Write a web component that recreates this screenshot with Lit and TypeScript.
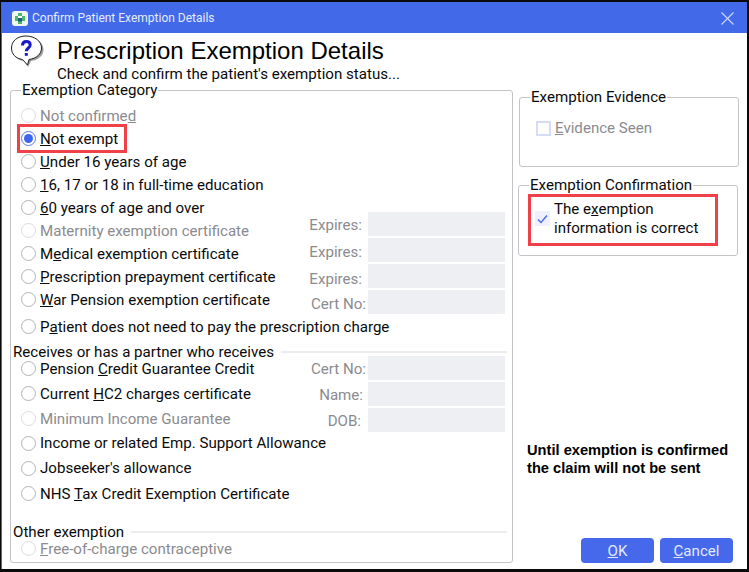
import { LitElement, html, css } from "lit";
import { customElement } from "lit/decorators.js";

type Row = { t: [string, string, string]; dis?: boolean; on?: boolean; h: string };

const block1: Row[] = [
  { t: ["Not confirme", "d", ""], dis: true, h: "h23" },
  { t: ["", "N", "ot exempt"], on: true, h: "h23" },
  { t: ["", "U", "nder 16 years of age"], h: "h23" },
  { t: ["", "1", "6, 17 or 18 in full-time education"], h: "h23" },
  { t: ["", "6", "0 years of age and over"], h: "h23" },
  { t: ["Maternity exemption certificate", "", ""], dis: true, h: "h23" },
  { t: ["M", "e", "dical exemption certificate"], h: "h23" },
  { t: ["", "P", "rescription prepayment certificate"], h: "h23" },
  { t: ["", "W", "ar Pension exemption certificate"], h: "h23" },
  { t: ["P", "a", "tient does not need to pay the prescription charge"], h: "h23 lower" },
];
const block2: Row[] = [
  { t: ["Pension ", "C", "redit Guarantee Credit"], h: "h25" },
  { t: ["Current ", "H", "C2 charges certificate"], h: "h25" },
  { t: ["Minimum Income Guarantee", "", ""], dis: true, h: "h25" },
  { t: ["Income or related Emp. Support Allowance", "", ""], h: "h24" },
  { t: ["Jobseeker's allowance", "", ""], h: "h26" },
  { t: ["NHS ", "T", "ax Credit Exemption Certificate"], h: "h25" },
];

type Field = { label: string; cls: string };
const fields1: Field[] = [
  { label: "Expires:", cls: "d2 g6" },
  { label: "Expires:", cls: "d4 g6" },
  { label: "Expires:", cls: "d6 g6" },
  { label: "Cert No:", cls: "d4 g2" },
];
const fields2: Field[] = [
  { label: "Cert No:", cls: "d2 g2" },
  { label: "Name:", cls: "d2 g5" },
  { label: "DOB:", cls: "d2 g7" },
];

@customElement("app-root")
export class AppRoot extends LitElement {
  static styles = css`
    :host { display: block; width: 749px; height: 572px; box-sizing: border-box; background: #fff;
      border-style: solid; border-color: #0a0a0a; border-width: 2px 2px 3px 1px; font-family: Roboto, sans-serif; font-size: 15.1px; color: #0a0a0a; overflow: hidden; }
    .win { display: flex; flex-direction: column; height: 100%; box-sizing: border-box; border-left: 1px solid #3a62e6; }
    .bar { height: 31px; flex: none; background: #4169e8; display: flex; align-items: center; padding: 1px 13px 0 10px; box-sizing: border-box; gap: 4px; color: #e6ecfc; font-size: 12px; }
    .bar .title { flex: 1; }
    .head { height: 50px; flex: none; display: flex; padding: 2px 0 0 8px; box-sizing: border-box; }
    .head .txt { margin-left: 12px; }
    .head svg { flex: none; }
    h1 { margin: 0; font: 400 24px/30px "Liberation Sans", sans-serif; color: #000; padding-top: 1px; }
    .sub { line-height: 16px; }
    .main { display: flex; flex: 1; min-height: 0; padding: 0 8px 6px 8px; gap: 6px; }
    fieldset { margin: 0; padding: 0; border: 1px solid #c4c4c8; border-radius: 3px; min-width: 0; box-sizing: border-box; }
    legend { padding: 0 1px; margin-left: 10px; line-height: 14px; }
    .cat { width: 503px; flex: none; height: 480px; padding: 0 7px 0 10px; }
    .cat legend { margin-left: 0; }
    .block { display: flex; }
    .first { padding-top: 7px; }
    .radios { flex: none; width: 285px; }
    .row { display: flex; align-items: center; gap: 4px; white-space: nowrap; }
    .h23 { height: 23px; }
    .h24 { height: 24px; }
    .h25 { height: 25px; }
    .h26 { height: 26px; }
    .lower { margin-top: 1px; }
    .dis { color: #8b8b8f; }
    .radio { width: 13px; height: 13px; flex: none; border: 1px solid #b4b4b8; border-radius: 50%; background: #fff; display: flex; align-items: center; justify-content: center; }
    .dis .radio { border-color: #dcdce0; }
    .radio.on { border-color: #5a78e8; }
    .radio.on::after { content: ""; width: 9px; height: 9px; border-radius: 50%; background: #3f66ec; }
    .mark { border: 3px solid #f04048; padding-left: 1px; margin: -3px 0 -3px -4px; display: flex; gap: 4px; align-items: center; width: 110px; height: 29px; box-sizing: border-box; }
    u { text-underline-offset: 1px; }
    .fields { display: flex; flex-direction: column; gap: 2px; flex: 1; min-width: 0; }
    .fields.a { padding-top: 108px; }
    .f { display: flex; justify-content: flex-end; align-items: center; height: 24px; color: #8b8b8f; }
    .f b { display: block; font-weight: 400; }
    .f i { display: block; flex: none; width: 137px; height: 24px; background: #eeeff3; }
    .d2 b { padding-top: 2px; }
    .d4 b { padding-top: 4px; }
    .d6 b { padding-top: 6px; }
    .g2 b { margin-right: 2px; }
    .g5 b { margin-right: 5px; }
    .g6 b { margin-right: 6px; }
    .g7 b { margin-right: 7px; }
    .sec { display: flex; align-items: center; gap: 7px; height: 16px; margin: 6px -2px -4px -8px; white-space: nowrap; }
    .sec::after { content: ""; flex: 1; height: 2px; background: #ececee; }
    .sec.other { margin-top: 18px; }
    .side { flex: 1; display: flex; flex-direction: column; min-width: 0; padding-top: 7px; }
    .ev { height: 77px; flex: none; }
    .conf { height: 78px; flex: none; margin: 11px 1px 0 -1px; }
    .cb { display: flex; align-items: center; gap: 4px; padding: 15px 0 0 16px; color: #8b8b8f; }
    .box { width: 11px; height: 11px; border: 2px solid #d5dcf3; background: #fff; flex: none; }
    .confmark { border: 3px solid #f04048; margin: 2px 0 0 9px; padding: 0 0 3px 4px; width: 190px; height: 52px; box-sizing: border-box; display: flex; align-items: center; gap: 4px; line-height: 19px; white-space: nowrap; }
    .tick { flex: none; width: 15px; height: 15px; background: #eef1fd; display: flex; align-items: center; justify-content: center; }
    .note { flex: 1; font: 700 14.67px/18px "Liberation Sans", sans-serif; color: #000; padding: 185px 0 0 8px; }
    .btns { display: flex; gap: 6px; justify-content: flex-end; padding: 0 6px 0 0; }
    .btn { width: 73px; height: 25px; border-radius: 4px; background: #4569ea; color: #e4eafc; display: flex; align-items: center; justify-content: center; }
  `;

  renderRow(r: Row) {
    return html`<div class="row ${r.h} ${r.dis ? "dis" : ""}">${r.on
      ? html`<span class="mark"><span class="radio on"></span><span><u>N</u>ot exempt</span></span>`
      : html`<span class="radio"></span><span>${r.t[0]}${r.t[1] ? html`<u>${r.t[1]}</u>` : ""}${r.t[2]}</span>`}</div>`;
  }

  field(f: Field) {
    return html`<div class="f ${f.cls}"><b>${f.label}</b><i></i></div>`;
  }

  render() {
    return html`<div class="win">
      <div class="bar">
        <svg width="16" height="15" viewBox="0 0 16 15"><rect width="16" height="15" rx="3" fill="#eef6ee"/><path d="M6 2h4v3h3v5h-3v3H6v-3H3V5h3z" fill="#4fb56e"/><rect x="6" y="5" width="4" height="5" fill="#fff"/><rect x="6" y="7" width="4" height="3.500" fill="#14607e"/></svg>
        <span class="title">Confirm Patient Exemption Details</span>
        <svg width="13" height="13" viewBox="0 0 13 13"><path d="M.5.500l12 12M12.500.500l-12 12" stroke="#cdd8fa" stroke-width="1.100" fill="none"/></svg>
      </div>
      <div class="head">
        <svg width="35" height="33" viewBox="0 0 35 33"><path d="M17.500 2.500C9 2.500 3 7.500 3 14.500c0 6 4 10.500 11 11.500l4 6 3-6c7-1 12.500-5 12.500-11.500 0-7-7-12-15.500-12z" fill="#9d9d9d"/><path d="M16 1C7.500 1 1.500 6 1.500 13c0 6 4 10.500 11 11.500l5 5.500 1.500-5.500c7.500-1 12.500-5.500 12.500-11.500C31.500 6 24.500 1 16 1z" fill="#fff" stroke="#222"/><path d="M12.500 10.500c0-2.700 1.800-4 3.800-4 2.200 0 3.900 1.300 3.900 3.400 0 3.100-3.900 3.100-3.900 6.400" fill="none" stroke="#1a1acb" stroke-width="3"/><rect x="14.800" y="18" width="3" height="2.800" fill="#1a1acb"/></svg>
        <div class="txt">
          <h1>Prescription Exemption Details</h1>
          <div class="sub">Check and confirm the patient's exemption status...</div>
        </div>
      </div>
      <div class="main">
        <fieldset class="cat">
          <legend>Exemption Category</legend>
          <div class="block first">
            <div class="radios">${block1.slice(0, 9).map((r) => this.renderRow(r))}</div>
            <div class="fields a">${fields1.map((f) => this.field(f))}</div>
          </div>
          ${this.renderRow(block1[9])}
          <div class="sec">Receives or has a partner who receives</div>
          <div class="block">
            <div class="radios">${block2.map((r) => this.renderRow(r))}</div>
            <div class="fields">${fields2.map((f) => this.field(f))}</div>
          </div>
          <div class="sec other">Other exemption</div>
          <div class="row h25 dis"><span class="radio"></span><span><u>F</u>ree-of-charge contraceptive</span></div>
        </fieldset>
        <div class="side">
          <fieldset class="ev">
            <legend>Exemption Evidence</legend>
            <div class="cb"><span class="box"></span><span><u>E</u>vidence Seen</span></div>
          </fieldset>
          <fieldset class="conf">
            <legend>Exemption Confirmation</legend>
            <div class="confmark">
              <span class="tick"><svg width="11" height="10" viewBox="0 0 11 10"><path d="M1 5.500l3 3 6-7" stroke="#4a6ce8" stroke-width="1.500" fill="none"/></svg></span>
              <span>The e<u>x</u>emption<br/>information is correct</span>
            </div>
          </fieldset>
          <div class="note">Until exemption is confirmed<br/>the claim will not be sent</div>
          <div class="btns">
            <div class="btn"><span><u>O</u>K</span></div>
            <div class="btn"><span><u>C</u>ancel</span></div>
          </div>
        </div>
      </div>
    </div>`;
  }
}
